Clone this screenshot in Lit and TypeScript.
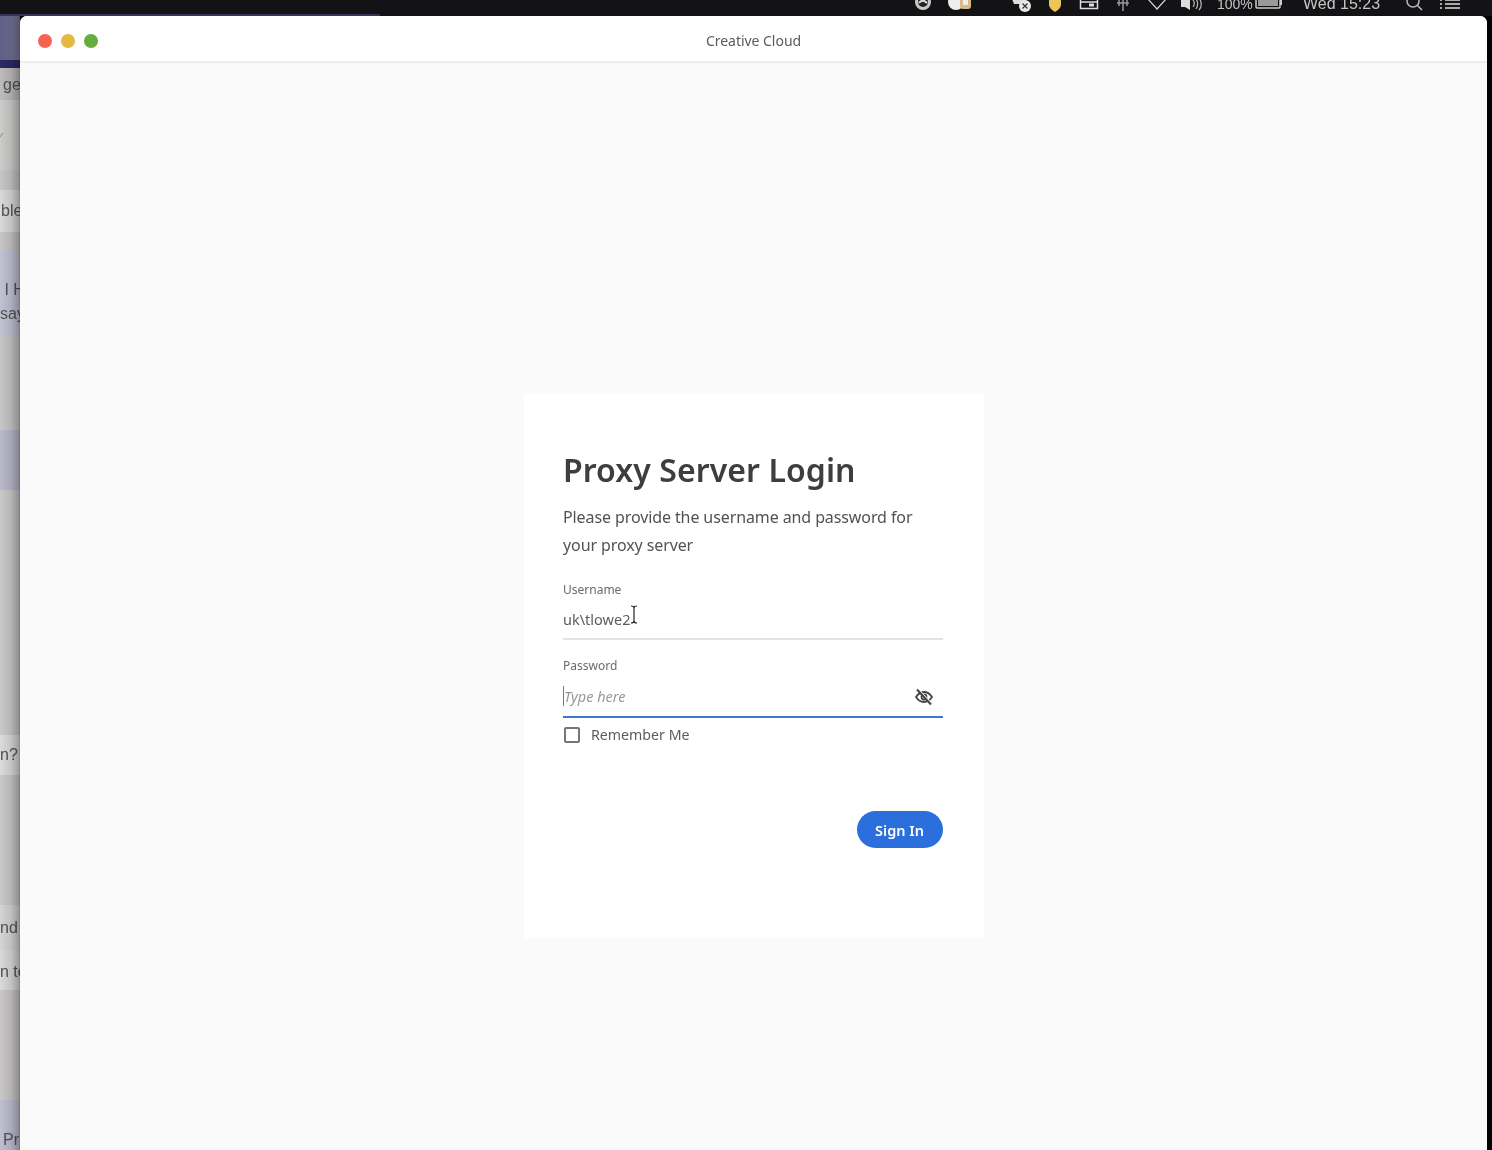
import { LitElement, html, css, svg } from "lit";
import { customElement } from "lit/decorators.js";
import { classMap } from "lit/directives/class-map.js";

interface Row { h: number; bg: string; lines?: string[]; pad?: number; top?: number; faint?: boolean }
const ROWS: Row[] = [
  { h: 44, bg: "linear-gradient(90deg,#62628a,#7d7da3)" },
  { h: 8, bg: "#2b2b68" },
  { h: 32, bg: "#c2c0c0", lines: ["get"], pad: 3, top: 2 },
  { h: 70, bg: "#d2d1d0", lines: ["✓"], pad: 0, top: 4, faint: true },
  { h: 20, bg: "#cbcbcb" },
  { h: 42, bg: "#dedede", lines: ["ble"], pad: 1 },
  { h: 18, bg: "#cbc9c9" },
  { h: 85, bg: "#c6c6da", lines: ["\u00a0I H", "say"], pad: 0, top: 18 },
  { h: 95, bg: "#cccbcb" },
  { h: 60, bg: "#bdbdd0" },
  { h: 245, bg: "#cfcdcd" },
  { h: 40, bg: "#e0e0e0", lines: ["n?"], pad: 0 },
  { h: 130, bg: "#cecdcd" },
  { h: 45, bg: "#d9d9d9", lines: ["nd"], pad: 0 },
  { h: 40, bg: "#dedede", lines: ["n to"], pad: 0, top: 4 },
  { h: 110, bg: "#cdcbcb" },
  { h: 50, bg: "#c3c3d6", lines: ["Pr"], pad: 3, top: 30 },
];

const I = (w: number, body: unknown) =>
  html`<svg width=${w} height="14" viewBox="0 0 ${w} 14" fill="none">${body}</svg>`;

const MENU = [
  { w: 36, c: I(24, svg`<circle cx="12" cy="3" r="8" fill="#c9c9c9"/><circle cx="12" cy="3" r="5" fill="#222"/><path d="M8 4c2-3 5-3 8 0" stroke="#ddd" stroke-width="2"/>`) },
  { w: 38, c: I(26, svg`<circle cx="9" cy="3" r="8" fill="#eee"/><rect x="13" y="-4" width="11" height="14" rx="3" fill="#d8b98c"/><rect x="16" y="0" width="5" height="6" fill="#eee"/>`) },
  { w: 28, c: "" },
  { w: 32, c: I(26, svg`<path d="M2 0h14l-2 5H4z" fill="#ddd"/><circle cx="15" cy="7" r="6" fill="#e8e8e8"/><path d="M12.500 4.500l5 5M17.500 4.500l-5 5" stroke="#333" stroke-width="1.200"/>`) },
  { w: 32, c: I(16, svg`<path d="M2 0h12v5c0 4-3 6-6 8-3-2-6-4-6-8z" fill="#ecc458"/>`) },
  { w: 36, c: I(20, svg`<rect x="1.500" y="0" width="17" height="9.500" stroke="#ddd" stroke-width="1.500"/><path d="M1 3h18" stroke="#ddd" stroke-width="1.500"/><rect x="10" y="4.500" width="5" height="3" fill="#ddd"/>`) },
  { w: 32, c: I(16, svg`<path d="M4 0v7M8 0v12M12 0v7M2 4h12" stroke="#999" stroke-width="1.500"/>`) },
  { w: 36, c: I(20, svg`<path d="M1 0l9 10 9-10" stroke="#d5d5d5" stroke-width="1.200"/>`) },
  { w: 34, c: I(24, svg`<path d="M1 1h4l5-3v13L5 8H1z" fill="#ddd"/><path d="M13 1c1.500 2 1.500 5 0 7M16 0c2 3 2 7 0 10M19 -1c3 4 3 9 0 12" stroke="#bbb" stroke-width="1.200"/>`) },
];
const MENU2 = [
  { w: 28, c: I(18, svg`<path d="M2 2a6 6 0 1 0 12 0a6 6 0 1 0-12 0M12 6l5 5" stroke="#bbb" stroke-width="1.500"/>`) },
  { w: 44, c: I(22, svg`<path d="M1 1h2M1 5h2M1 9h2M6 1h15M6 5h15M6 9h15" stroke="#ddd" stroke-width="1.500"/>`) },
];

@customElement("app-root")
export class AppRoot extends LitElement {
  static styles = css`
    :host {
      display: block;
      width: 1492px;
      height: 1150px;
      overflow: hidden;
      background: #000;
      font-family: "Noto Sans", "Open Sans", sans-serif;
      filter: blur(0.5px);
    }
    .menubar {
      position: relative;
      height: 16px;
      box-sizing: border-box;
      padding: 0 0 3px 905px;
      display: flex;
      align-items: flex-end;
      background: #131316;
      overflow: hidden;
    }
    .menubar::before {
      content: "";
      position: absolute;
      left: 0;
      bottom: 0;
      width: 380px;
      height: 2px;
      background: #33335c;
    }
    .slot {
      height: 13px;
      flex: none;
      display: flex;
      justify-content: center;
      align-items: flex-end;
    }
    .slot svg { display: block; overflow: visible; }
    .mtext {
      flex: none;
      height: 8px;
      margin-bottom: 5px;
      display: flex;
      align-items: flex-end;
      font: 16px/8px "Liberation Sans", sans-serif;
      color: #c4c4c4;
      white-space: nowrap;
    }
    .pct { width: 36px; font-size: 14px; margin-left: 8px; }
    .batt { width: 32px; }
    .clock { width: 97px; margin-left: 18px; }
    .main { display: flex; height: 1134px; }
    .strip {
      position: relative;
      width: 20px;
      flex: none;
      overflow: hidden;
      filter: blur(0.7px);
    }
    .strip::after {
      content: "";
      position: absolute;
      inset: 0;
      background: linear-gradient(90deg, rgba(0,0,0,.02) 0%, rgba(0,0,0,.12) 55%, rgba(0,0,0,.3) 95%, rgba(0,0,0,.45) 100%);
    }
    .row {
      box-sizing: border-box;
      display: flex;
      flex-direction: column;
      justify-content: center;
      font: 16px/24px "Liberation Sans", sans-serif;
      color: #555;
      white-space: nowrap;
    }
    .row.faint { color: #9a9a9a; font-size: 13px; margin-left: -5px; }
    .window {
      width: 1467px;
      flex: none;
      display: flex;
      flex-direction: column;
      background: #fafafa;
      border-radius: 7px 7px 0 0;
      overflow: hidden;
    }
    .titlebar {
      position: relative;
      height: 47px;
      flex: none;
      box-sizing: border-box;
      padding-top: 4px;
      background: #fff;
      border-bottom: 2px solid #ececec;
      display: flex;
      align-items: center;
      justify-content: center;
      font-size: 14px;
      letter-spacing: -0.03px;
      color: #5a5a5a;
    }
    .lights {
      position: absolute;
      left: 18px;
      top: 17.500px;
      display: flex;
      gap: 9px;
    }
    .light { width: 14px; height: 14px; border-radius: 50%; }
    .red { background: #f8634f; }
    .yellow { background: #e5b83f; }
    .green { background: #66ad3f; }
    .content {
      flex: 1;
      display: flex;
      justify-content: center;
      align-items: flex-start;
      padding-top: 331px;
    }
    .card {
      width: 460px;
      height: 544px;
      box-sizing: border-box;
      background: #fff;
      padding: 54px 41px 0 39.500px;
      display: flex;
      flex-direction: column;
    }
    h1 {
      margin: -1px 0 1px;
      font-size: 32px;
      line-height: 46px;
      font-weight: 600;
      color: #3e3e3e;
      letter-spacing: 0.08px;
    }
    .desc {
      margin: 9px 0 0;
      font-size: 16px;
      line-height: 28px;
      letter-spacing: -0.1px;
      color: #525252;
    }
    .label {
      font-size: 12px;
      line-height: 16px;
      color: #6a6a6a;
    }
    .username { margin-top: 23px; }
    .field {
      position: relative;
      display: flex;
      align-items: center;
      justify-content: space-between;
      box-sizing: border-box;
      height: 42px;
      padding-top: 2px;
      font-size: 14.500px;
      color: #5c5c5c;
      border-bottom: 2px solid #e2e2e2;
    }
    .password-label { margin-top: 18px; }
    .field.focus {
      border-bottom-color: #3d78cc;
      height: 44px;
    }
    .placeholder {
      font-style: italic;
      color: #989898;
      border-left: 1.500px solid #777;
      line-height: 20px;
    }
    .ibeam {
      position: absolute;
      left: 67px;
      top: 7px;
      display: block;
    }
    .eye { margin: 1px 9px 0 0; display: block; }
    .remember {
      display: flex;
      align-items: center;
      gap: 11px;
      margin-top: 7px;
      font-size: 14.200px;
      line-height: 20px;
      color: #5c5c5c;
    }
    .box {
      width: 16px;
      height: 16px;
      box-sizing: border-box;
      margin-left: 1px;
      border: 2px solid #757575;
      border-radius: 2px;
    }
    .actions {
      display: flex;
      justify-content: flex-end;
      margin-top: 66px;
    }
    .signin {
      width: 86px;
      height: 37px;
      padding: 0;
      border: 0;
      border-radius: 19px;
      background: #2a6fdc;
      color: #fff;
      font: 600 14.500px "Noto Sans", sans-serif;
    }
  `;

  render() {
    return html`
      <div class="menubar">
        ${MENU.map((m) => html`<div class="slot" style="width:${m.w}px">${m.c}</div>`)}
        <div class="mtext pct">100%</div>
        <div class="slot batt">${I(28, svg`<rect x="1" y="-2" width="24" height="11" rx="1" stroke="#ccc" stroke-width="1.500"/><rect x="3" y="0" width="20" height="7" fill="#999"/><path d="M26 1v5" stroke="#ccc" stroke-width="2"/>`)}</div>
        <div class="mtext clock">Wed 15:23</div>
        ${MENU2.map((m) => html`<div class="slot" style="width:${m.w}px">${m.c}</div>`)}
      </div>
      <div class="main">
        <div class="strip">
          ${ROWS.map(
            (r) => html`<div class=${classMap({ row: true, faint: !!r.faint })} style="height:${r.h}px;background:${r.bg};padding-left:${r.pad ?? 0}px;padding-top:${r.top ?? 0}px">
              ${(r.lines ?? []).map((l) => html`<div>${l}</div>`)}
            </div>`
          )}
        </div>
        <div class="window">
          <div class="titlebar">
            <div class="lights">
              <span class="light red"></span><span class="light yellow"></span><span class="light green"></span>
            </div>
            Creative Cloud
          </div>
          <div class="content">
            <div class="card">
              <h1>Proxy Server Login</h1>
              <p class="desc">Please provide the username and password for your proxy server</p>
              <div class="label username">Username</div>
              <div class="field">
                <span>uk\\tlowe2</span>
                <svg class="ibeam" width="8" height="19" viewBox="0 0 8 19" fill="none" stroke="#222" stroke-width="1.200">
                  <path d="M1 1c2 0 3 .5 3 2v13c0 1.500-1 2-3 2M7 1c-2 0-3 .5-3 2v13c0 1.500 1 2 3 2" />
                </svg>
              </div>
              <div class="label password-label">Password</div>
              <div class="field focus">
                <span class="placeholder">Type here</span>
                <svg class="eye" width="20" height="18" viewBox="0 0 20 18" fill="none" stroke="#444" stroke-width="1.800">
                  <path d="M2 9c2-3 5-5 8-5s6 2 8 5c-2 3-5 5-8 5s-6-2-8-5z" />
                  <circle cx="10" cy="9" r="2.500" />
                  <path d="M4.500 1.500l14 15" stroke="#fff" stroke-width="1.500" />
                  <path d="M3 1.500l14 15" stroke-width="2" />
                </svg>
              </div>
              <label class="remember"><span class="box"></span>Remember Me</label>
              <div class="actions"><button class="signin">Sign In</button></div>
            </div>
          </div>
        </div>
      </div>
    `;
  }
}
